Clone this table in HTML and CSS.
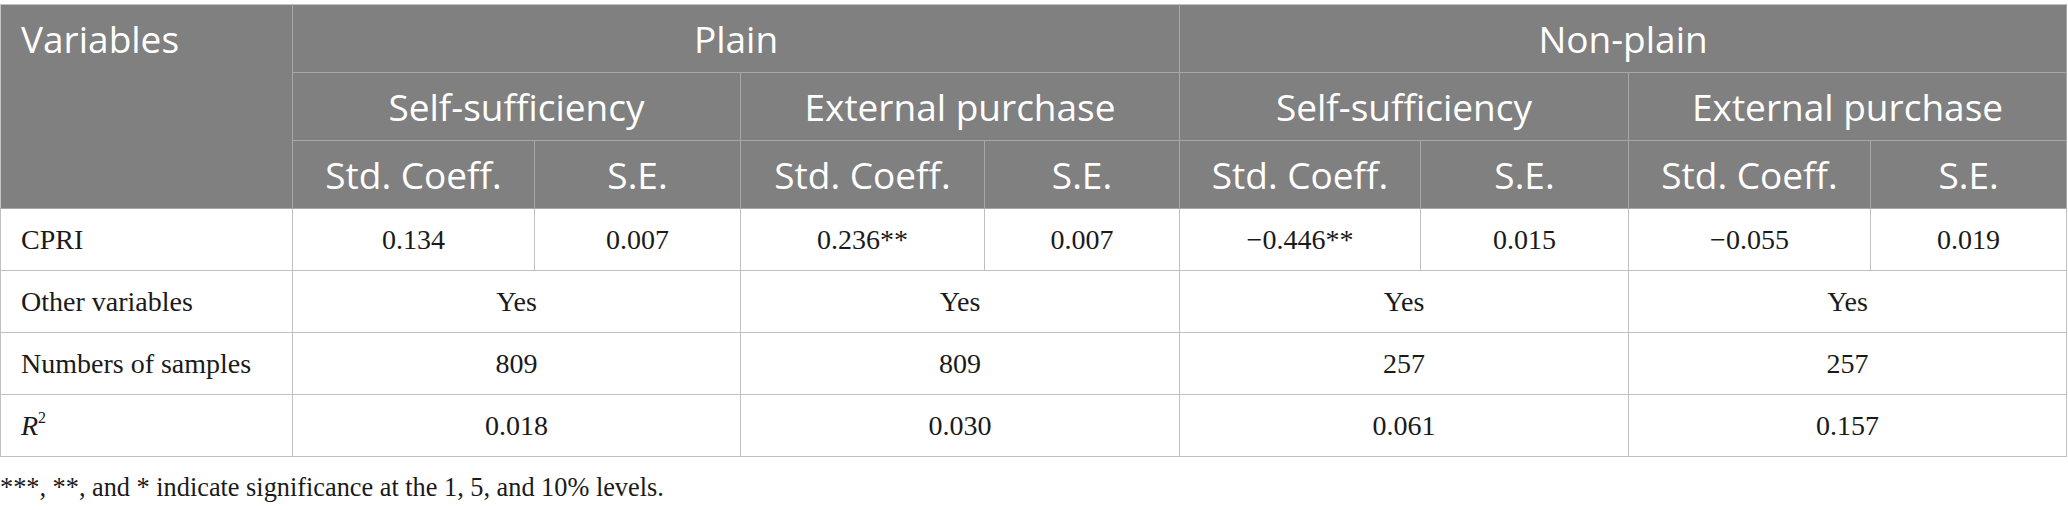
FILE: index.html
```html
<!DOCTYPE html>
<html>
<head>
<meta charset="utf-8">
<link rel="stylesheet" href="styles.css">
</head>
<body>
<div class="wrap">
<table class="tbl">
  <colgroup>
    <col class="w-var">
    <col class="w-a">
    <col class="w-b">
    <col class="w-c">
    <col class="w-d">
    <col class="w-e">
    <col class="w-f">
    <col class="w-g">
    <col class="w-h">
  </colgroup>
  <thead>
    <tr class="hrow">
      <th rowspan="3" class="var">Variables</th>
      <th colspan="4">Plain</th>
      <th colspan="4">Non-plain</th>
    </tr>
    <tr class="hrow">
      <th colspan="2">Self-sufficiency</th>
      <th colspan="2">External purchase</th>
      <th colspan="2">Self-sufficiency</th>
      <th colspan="2">External purchase</th>
    </tr>
    <tr class="hrow">
      <th>Std. Coeff.</th>
      <th>S.E.</th>
      <th>Std. Coeff.</th>
      <th>S.E.</th>
      <th>Std. Coeff.</th>
      <th>S.E.</th>
      <th>Std. Coeff.</th>
      <th>S.E.</th>
    </tr>
  </thead>
  <tbody>
    <tr class="brow">
      <td class="lbl">CPRI</td>
      <td>0.134</td>
      <td>0.007</td>
      <td>0.236**</td>
      <td>0.007</td>
      <td>−0.446**</td>
      <td>0.015</td>
      <td>−0.055</td>
      <td>0.019</td>
    </tr>
    <tr class="brow">
      <td class="lbl">Other variables</td>
      <td colspan="2">Yes</td>
      <td colspan="2">Yes</td>
      <td colspan="2">Yes</td>
      <td colspan="2">Yes</td>
    </tr>
    <tr class="brow">
      <td class="lbl">Numbers of samples</td>
      <td colspan="2">809</td>
      <td colspan="2">809</td>
      <td colspan="2">257</td>
      <td colspan="2">257</td>
    </tr>
    <tr class="brow">
      <td class="lbl"><i>R</i><sup class="sup">2</sup></td>
      <td colspan="2">0.018</td>
      <td colspan="2">0.030</td>
      <td colspan="2">0.061</td>
      <td colspan="2">0.157</td>
    </tr>
  </tbody>
</table>
<p class="note">***, **, and * indicate significance at the 1, 5, and 10% levels.</p>
</div>
</body>
</html>
```
FILE: styles.css
```css
html, body {
  margin: 0;
  padding: 0;
  background: #ffffff;
}
.wrap {
  padding-top: 4px;
  width: 2068px;
}
.tbl {
  border-collapse: collapse;
  table-layout: fixed;
  width: 2066px;
  font-family: "Liberation Serif", "Times New Roman", serif;
  font-size: 28px;
  color: #1a1a1a;
}
.w-var { width: 292px; }
.w-a { width: 242px; }
.w-b { width: 206px; }
.w-c { width: 244px; }
.w-d { width: 195px; }
.w-e { width: 241px; }
.w-f { width: 208px; }
.w-g { width: 242px; }
.w-h { width: 196px; }
.tbl th {
  background: #808080;
  color: #ffffff;
  font-family: "Open Sans", "Noto Sans", sans-serif;
  font-weight: 400;
  font-size: 37px;
  text-align: center;
  vertical-align: middle;
  border: 1px solid #a8a8a8;
  padding: 0 8px;
  line-height: 40px;
  white-space: nowrap;
}
.tbl thead tr:first-child th {
  border-top-color: #c4c4c4;
}
.tbl th.var {
  text-align: left;
  vertical-align: top;
  padding: 14px 20px 0 20px;
  border-left-color: #c4c4c4;
}
.hrow {
  height: 68px;
}
.brow {
  height: 62px;
}
.tbl td {
  border: 1px solid #c0c0c0;
  text-align: center;
  vertical-align: middle;
  padding: 0 8px;
  line-height: 32px;
  white-space: nowrap;
}
.tbl td.lbl {
  text-align: left;
  padding-left: 20px;
}
.sup {
  font-size: 16px;
  vertical-align: 12px;
  line-height: 0;
}
.note {
  margin: 15px 0 0 0;
  font-family: "Liberation Serif", "Times New Roman", serif;
  font-size: 26.3px;
  line-height: 32px;
  color: #1a1a1a;
}
```
